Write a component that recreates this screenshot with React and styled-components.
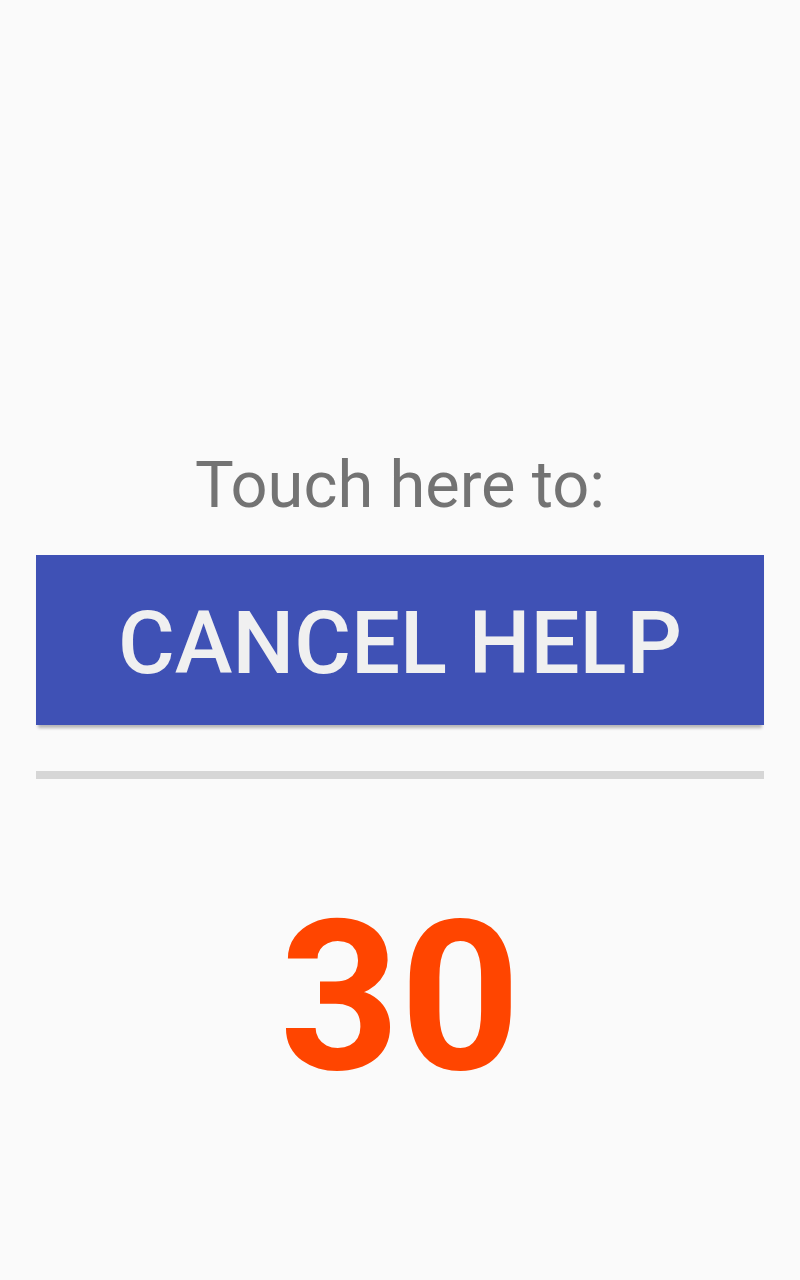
import React from "react";
import styled, { createGlobalStyle } from "styled-components";

const GlobalStyle = createGlobalStyle`
  * { box-sizing: border-box; }
  body {
    margin: 0;
    background: #fafafa;
    font-family: Roboto, "Liberation Sans", sans-serif;
  }
`;

const Screen = styled.main`
  display: flex;
  flex-direction: column;
  justify-content: flex-end;
  min-height: 100vh;
  padding: 0 36px 163px;
`;

const Prompt = styled.p`
  margin: 0 0 30px;
  color: #737373;
  font-size: 65px;
  line-height: 80px;
  text-align: center;
`;

const CancelButton = styled.button`
  width: 100%;
  padding: 40px 16px 34px;
  border: 0;
  background: #3f51b5;
  box-shadow: 0 5px 3px -2px rgba(0, 0, 0, 0.28);
  color: #f0f0f0;
  font: 500 87px/96px Roboto, "Liberation Sans", sans-serif;
  text-transform: uppercase;
  white-space: nowrap;
  cursor: pointer;
`;

const Divider = styled.hr`
  width: 100%;
  height: 8px;
  margin: 46px 0 98px;
  border: 0;
  background: #d6d6d6;
`;

const Countdown = styled.div`
  color: #ff4500;
  font-size: 210px;
  font-weight: 700;
  line-height: 240px;
  text-align: center;
`;

export default function App() {
  return (
    <>
      <GlobalStyle />
      <Screen>
        <Prompt>Touch here to:</Prompt>
        <CancelButton type="button">Cancel Help</CancelButton>
        <Divider />
        <Countdown role="timer">30</Countdown>
      </Screen>
    </>
  );
}
